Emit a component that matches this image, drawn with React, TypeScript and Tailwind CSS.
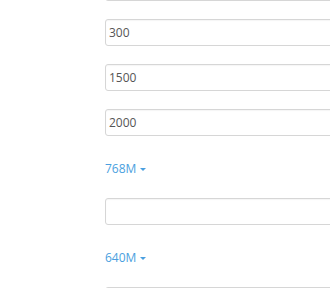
export default function App() {
  const Field = ({ value }: { value?: string }) => (
    <input
      readOnly
      value={value ?? ''}
      className="h-[27px] w-[240px] rounded-[3px] border border-[#d6d6d6] bg-white px-[3px] text-[12px] text-[#555] shadow-[inset_0_1px_1px_rgba(0,0,0,0.04)] outline-none"
    />
  );

  const Link = ({ label }: { label: string }) => (
    <div className="mt-[23px] mb-[19px] flex h-[20px] items-center gap-[4px] text-[12px] text-[#4a9fe0]">
      <span>{label}</span>
      <span className="mt-[1px] h-0 w-0 border-x-[3px] border-t-[3px] border-x-transparent border-t-[#4a9fe0]" />
    </div>
  );

  return (
    <div
      className="h-[288px] w-[330px] overflow-hidden bg-white"
      style={{ fontFamily: '"Open Sans", sans-serif' }}
    >
      <div className="-mt-[26px] flex flex-col pl-[105px]">
        <div className="flex flex-col gap-[18px]">
          <Field value="" />
          <Field value="300" />
          <Field value="1500" />
          <Field value="2000" />
        </div>
        <Link label="768M" />
        <Field />
        <Link label="640M" />
        <Field />
      </div>
    </div>
  );
}
